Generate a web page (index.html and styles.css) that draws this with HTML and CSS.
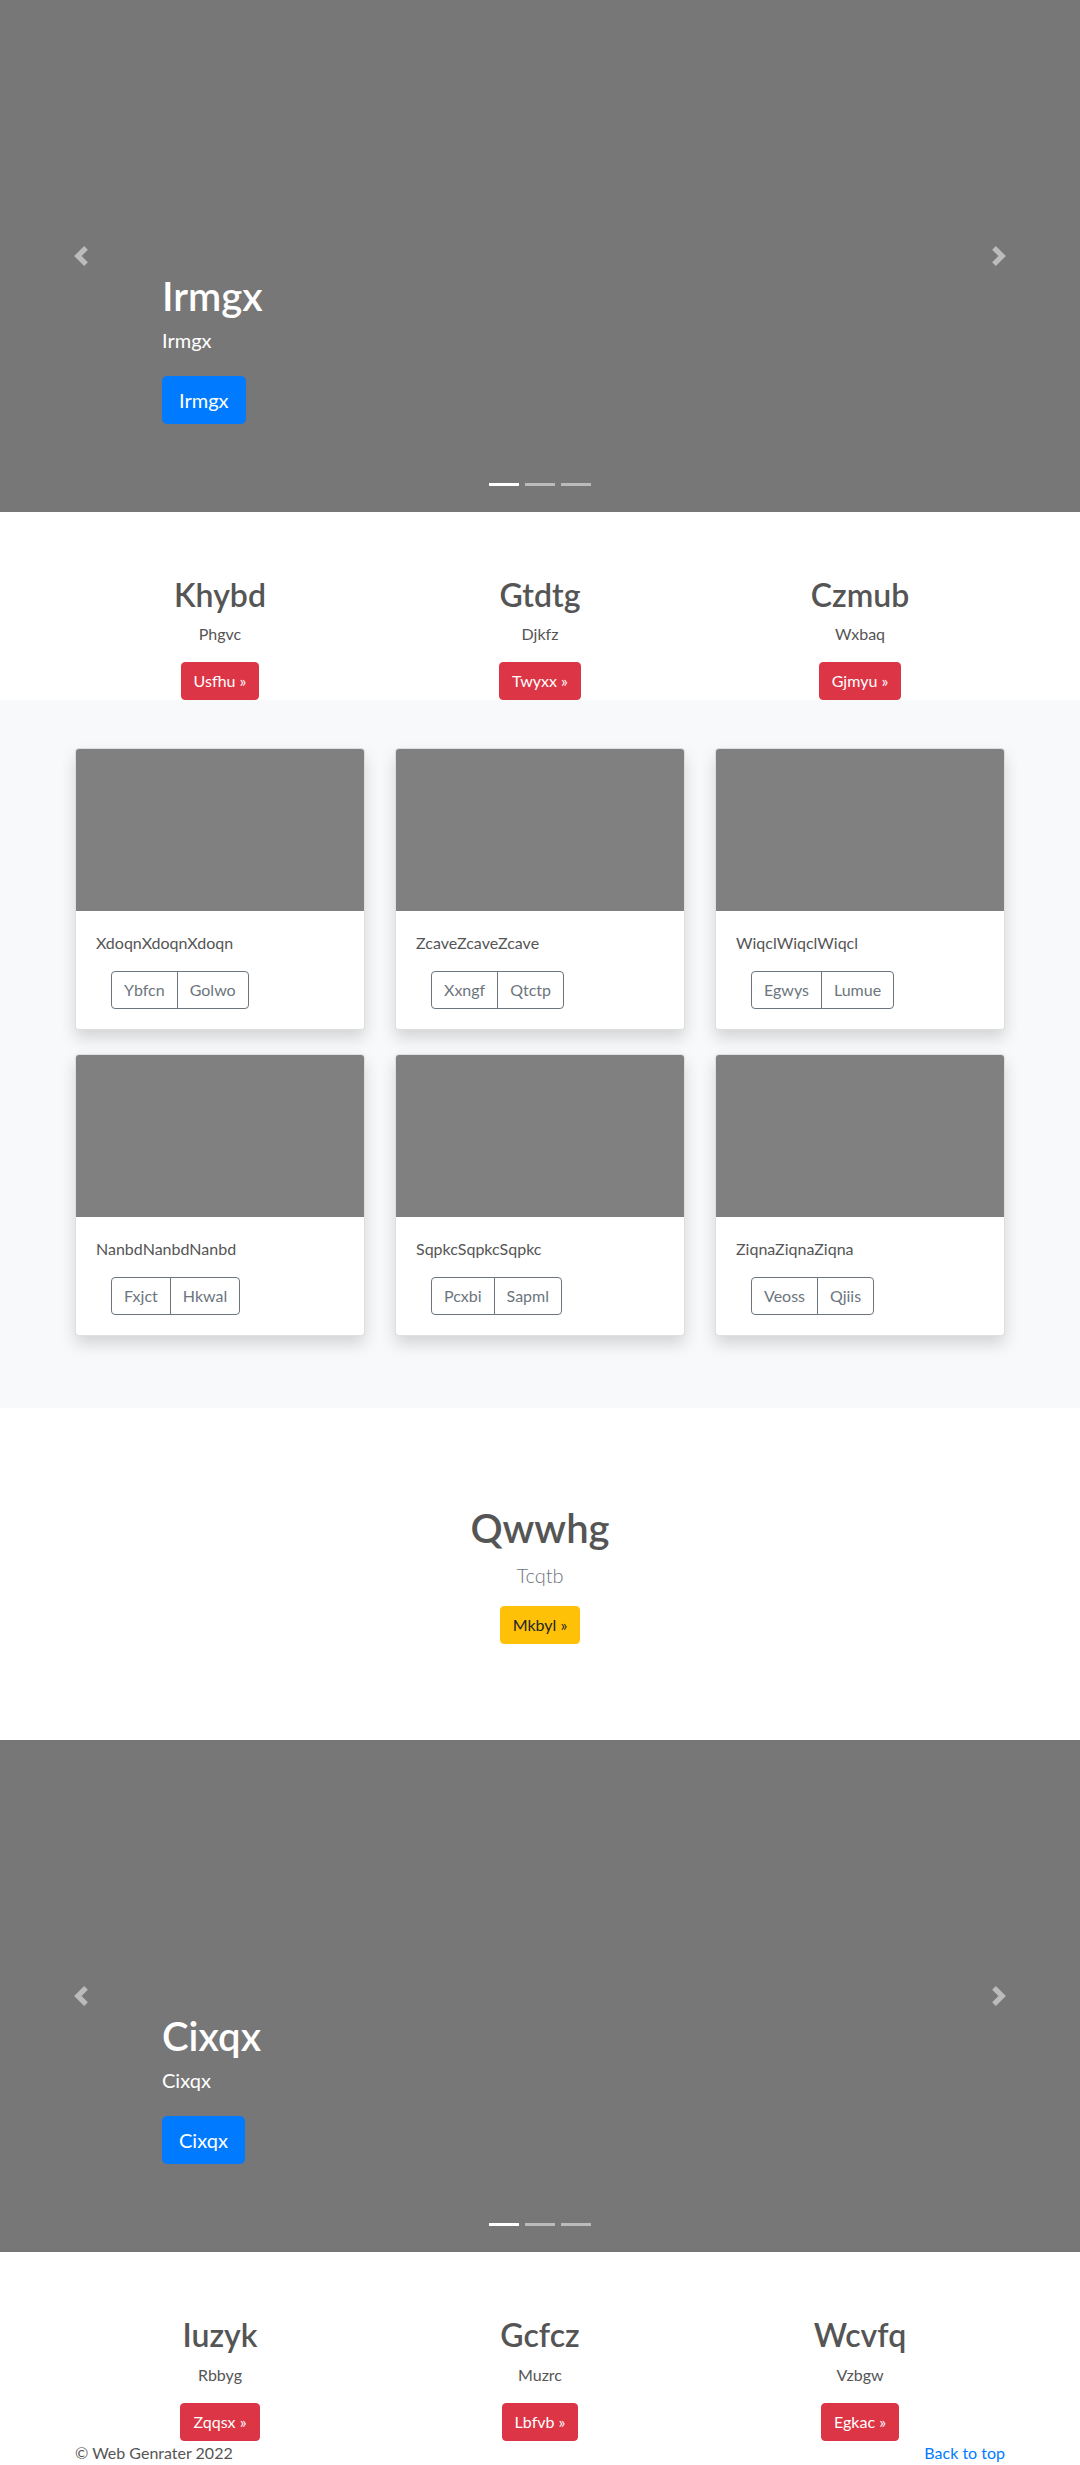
FILE: index.html
```html
<!DOCTYPE html>
<html lang="en">
<head>
<meta charset="utf-8">
<title>Web Genrater</title>
<link rel="stylesheet" href="styles.css">
</head>
<body>
<section class="hero">
  <div class="hero-caption">
    <h1 class="hero-title">Irmgx</h1>
    <p class="hero-sub">Irmgx</p>
    <p class="hero-action"><a class="btn btn-lg btn-primary" href="#">Irmgx</a></p>
  </div>
  <a class="hero-ctrl hero-ctrl-prev" href="#"><svg width="20" height="20" viewBox="0 0 8 8"><path d="M5.25 0l-4 4 4 4 1.5-1.5L4.25 4l2.5-2.5L5.25 0z"/></svg></a>
  <a class="hero-ctrl hero-ctrl-next" href="#"><svg width="20" height="20" viewBox="0 0 8 8"><path d="M2.75 0l-1.5 1.5 2.5 2.5-2.5 2.5 1.5 1.5 4-4-4-4z"/></svg></a>
  <ol class="hero-dots"><li class="active"></li><li></li><li></li></ol>
</section>

<div class="marketing">
  <div class="feature"><h2>Khybd</h2><p>Phgvc</p><p class="feature-action"><a class="btn btn-danger" href="#">Usfhu &raquo;</a></p></div>
  <div class="feature"><h2>Gtdtg</h2><p>Djkfz</p><p class="feature-action"><a class="btn btn-danger" href="#">Twyxx &raquo;</a></p></div>
  <div class="feature"><h2>Czmub</h2><p>Wxbaq</p><p class="feature-action"><a class="btn btn-danger" href="#">Gjmyu &raquo;</a></p></div>
</div>

<section class="album">
  <div class="album-grid">
    <div class="card"><div class="card-img"></div><div class="card-body"><p class="card-text">XdoqnXdoqnXdoqn</p><div class="btn-group"><a class="btn btn-outline" href="#">Ybfcn</a><a class="btn btn-outline" href="#">Golwo</a></div></div></div>
    <div class="card"><div class="card-img"></div><div class="card-body"><p class="card-text">ZcaveZcaveZcave</p><div class="btn-group"><a class="btn btn-outline" href="#">Xxngf</a><a class="btn btn-outline" href="#">Qtctp</a></div></div></div>
    <div class="card"><div class="card-img"></div><div class="card-body"><p class="card-text">WiqclWiqclWiqcl</p><div class="btn-group"><a class="btn btn-outline" href="#">Egwys</a><a class="btn btn-outline" href="#">Lumue</a></div></div></div>
    <div class="card"><div class="card-img"></div><div class="card-body"><p class="card-text">NanbdNanbdNanbd</p><div class="btn-group"><a class="btn btn-outline" href="#">Fxjct</a><a class="btn btn-outline" href="#">Hkwal</a></div></div></div>
    <div class="card"><div class="card-img"></div><div class="card-body"><p class="card-text">SqpkcSqpkcSqpkc</p><div class="btn-group"><a class="btn btn-outline" href="#">Pcxbi</a><a class="btn btn-outline" href="#">Sapml</a></div></div></div>
    <div class="card"><div class="card-img"></div><div class="card-body"><p class="card-text">ZiqnaZiqnaZiqna</p><div class="btn-group"><a class="btn btn-outline" href="#">Veoss</a><a class="btn btn-outline" href="#">Qjiis</a></div></div></div>
  </div>
</section>

<section class="cta">
  <h1 class="cta-title">Qwwhg</h1>
  <p class="cta-lead">Tcqtb</p>
  <p class="cta-action"><a class="btn btn-warning" href="#">Mkbyl &raquo;</a></p>
</section>

<section class="hero">
  <div class="hero-caption">
    <h1 class="hero-title">Cixqx</h1>
    <p class="hero-sub">Cixqx</p>
    <p class="hero-action"><a class="btn btn-lg btn-primary" href="#">Cixqx</a></p>
  </div>
  <a class="hero-ctrl hero-ctrl-prev" href="#"><svg width="20" height="20" viewBox="0 0 8 8"><path d="M5.25 0l-4 4 4 4 1.5-1.5L4.25 4l2.5-2.5L5.25 0z"/></svg></a>
  <a class="hero-ctrl hero-ctrl-next" href="#"><svg width="20" height="20" viewBox="0 0 8 8"><path d="M2.75 0l-1.5 1.5 2.5 2.5-2.5 2.5 1.5 1.5 4-4-4-4z"/></svg></a>
  <ol class="hero-dots"><li class="active"></li><li></li><li></li></ol>
</section>

<div class="marketing">
  <div class="feature"><h2>Iuzyk</h2><p>Rbbyg</p><p class="feature-action"><a class="btn btn-danger" href="#">Zqqsx &raquo;</a></p></div>
  <div class="feature"><h2>Gcfcz</h2><p>Muzrc</p><p class="feature-action"><a class="btn btn-danger" href="#">Lbfvb &raquo;</a></p></div>
  <div class="feature"><h2>Wcvfq</h2><p>Vzbgw</p><p class="feature-action"><a class="btn btn-danger" href="#">Egkac &raquo;</a></p></div>
</div>

<footer class="footer">
  <p class="footer-copy">&copy; Web Genrater 2022</p>
  <p class="footer-top"><a href="#">Back to top</a></p>
</footer>
</body>
</html>
```

FILE: styles.css
```css
* { box-sizing: border-box; }

body {
  margin: 0;
  font-family: Lato, "Open Sans", "Noto Sans", sans-serif;
  font-size: 16px;
  line-height: 1.5;
  color: #555;
  background: #fff;
}

a { color: #007bff; text-decoration: none; }

.btn {
  display: inline-block;
  font-weight: 400;
  font-size: 16px;
  line-height: 1.5;
  padding: 6px 12px;
  border: 1px solid transparent;
  border-radius: 4px;
  text-align: center;
  vertical-align: middle;
}
.btn-lg { font-size: 20px; padding: 8px 16px; border-radius: 4.8px; }
.btn-primary { background: #007bff; border-color: #007bff; color: #fff; }
.btn-danger { background: #dc3545; border-color: #dc3545; color: #fff; }
.btn-warning { background: #ffc107; border-color: #ffc107; color: #212529; }
.btn-outline { background: transparent; border-color: #6c757d; color: #6c757d; }

/* Hero carousel */
.hero {
  position: relative;
  height: 512px;
  background: #777;
  display: flex;
  flex-direction: column;
  justify-content: flex-end;
  padding: 0 15% 88px;
  color: #fff;
}
.hero-title {
  margin: 0 0 8px;
  font-size: 40px;
  line-height: 1.2;
  font-weight: 600;
}
.hero-sub {
  margin: 0 0 24px;
  font-size: 20px;
  line-height: 1.2;
}
.hero-action { margin: 0; }

.hero-ctrl {
  position: absolute;
  top: 0;
  bottom: 0;
  width: 15%;
  display: flex;
  align-items: center;
  justify-content: center;
  opacity: 0.5;
}
.hero-ctrl svg { fill: #fff; display: block; }
.hero-ctrl-prev { left: 0; }
.hero-ctrl-next { right: 0; }

.hero-dots {
  position: absolute;
  left: 0;
  right: 0;
  bottom: 0;
  margin: 0 0 16px;
  padding: 0;
  list-style: none;
  display: flex;
  justify-content: center;
}
.hero-dots li {
  width: 30px;
  height: 23px;
  margin: 0 3px;
  border-top: 10px solid transparent;
  border-bottom: 10px solid transparent;
  background: #fff;
  background-clip: padding-box;
  opacity: 0.5;
}
.hero-dots li.active { opacity: 1; }

/* Marketing columns */
.marketing {
  width: 960px;
  margin: 64px auto 0;
  padding: 0 15px;
  display: grid;
  grid-template-columns: repeat(3, 1fr);
  column-gap: 30px;
  text-align: center;
}
.feature h2 {
  margin: 0 0 8px;
  font-size: 32px;
  line-height: 1.2;
  font-weight: 600;
  color: #555;
}
.feature p { margin: 0 0 16px; }
.feature .feature-action { margin: 0; }

/* Album */
.album {
  background: #f8f9fa;
  padding: 48px 0 72px;
}
.album-grid {
  width: 960px;
  margin: 0 auto;
  padding: 0 15px;
  display: grid;
  grid-template-columns: repeat(3, 1fr);
  column-gap: 30px;
  row-gap: 24px;
}
.card {
  background: #fff;
  border: 1px solid rgba(0, 0, 0, 0.125);
  border-radius: 4px;
  box-shadow: 0 8px 16px rgba(0, 0, 0, 0.15);
  overflow: hidden;
}
.card-img {
  height: 162px;
  background: #808080;
}
.card-body { padding: 20px; }
.card-text { margin: 0 0 16px; color: #555; }
.btn-group {
  display: inline-flex;
  margin-left: 15px;
}
.btn-group .btn + .btn { margin-left: -1px; }
.btn-group .btn:first-child { border-top-right-radius: 0; border-bottom-right-radius: 0; }
.btn-group .btn:last-child { border-top-left-radius: 0; border-bottom-left-radius: 0; }

/* CTA */
.cta {
  padding: 96px 0;
  text-align: center;
}
.cta-title {
  margin: 0 0 8px;
  font-size: 40px;
  line-height: 1.2;
  font-weight: 600;
  color: #555;
}
.cta-lead {
  margin: 0 0 16px;
  font-size: 20px;
  font-weight: 300;
  color: #6c757d;
}
.cta-action { margin: 0; }

/* Footer */
.footer {
  width: 960px;
  margin: 0 auto;
  padding: 0 15px;
  display: flex;
  justify-content: space-between;
}
.footer p { margin: 0 0 16px; }
```
